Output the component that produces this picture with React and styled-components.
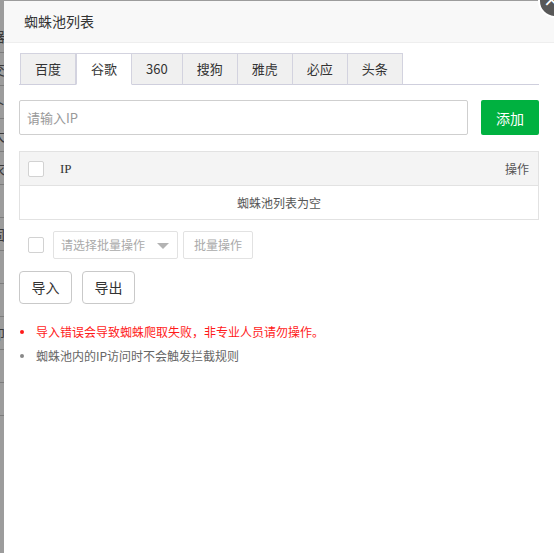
import styled, { createGlobalStyle } from 'styled-components';

const GlobalStyle = createGlobalStyle`
  html, body {
    margin: 0;
    padding: 0;
    overflow: hidden;
  }
  body {
    font-family: "Noto Sans CJK SC", "Noto Sans", sans-serif;
    color: #333;
  }
  * { box-sizing: border-box; }
`;

const tabs = ['百度', '谷歌', '360', '搜狗', '雅虎', '必应', '头条'];
const backRows = ['器', '交', '卜', '大', '衣', '阝', '固', '', '\\', '卯', '', ''];

const App = () => {
    return (
        <Page>
            <GlobalStyle />
            <Backdrop>
                {backRows.map((c, i) => (
                    <BackRow key={i}>{c}</BackRow>
                ))}
            </Backdrop>

            <Modal>
                <CloseButton>×</CloseButton>
                <Header>蜘蛛池列表</Header>
                <Body>
                    <TabBar>
                        {tabs.map(t => (
                            <Tab key={t} active={t === '谷歌'}>{t}</Tab>
                        ))}
                    </TabBar>

                    <InputRow>
                        <TextInput placeholder="请输入IP" />
                        <AddButton>添加</AddButton>
                    </InputRow>

                    <Table>
                        <HeadRow>
                            <Checkbox />
                            <IpHead>IP</IpHead>
                            <OpHead>操作</OpHead>
                        </HeadRow>
                        <EmptyRow>蜘蛛池列表为空</EmptyRow>
                    </Table>

                    <BatchRow>
                        <Checkbox />
                        <Select>
                            请选择批量操作
                            <Arrow />
                        </Select>
                        <GhostButton>批量操作</GhostButton>
                    </BatchRow>

                    <ButtonRow>
                        <PlainButton>导入</PlainButton>
                        <PlainButton>导出</PlainButton>
                    </ButtonRow>

                    <Notes>
                        <Note warn>导入错误会导致蜘蛛爬取失败，非专业人员请勿操作。</Note>
                        <Note>蜘蛛池内的IP访问时不会触发拦截规则</Note>
                    </Notes>
                </Body>
            </Modal>
        </Page>
    );
};

export default App;

const Page = styled.div`
  position: relative;
  width: 554px;
  height: 553px;
  overflow: hidden;
  background-color: #9c9c9c;
`;

const Backdrop = styled.div`
  display: flex;
  flex-direction: column;
  padding-top: 20px;
`;

const BackRow = styled.div`
  height: 33px;
  line-height: 33px;
  border-bottom: 1px solid #7d7d7d;
  font-size: 14px;
  color: #3a3a3a;
  text-indent: -9px;
`;

const Modal = styled.div`
  position: absolute;
  left: 4px;
  top: 1px;
  width: 550px;
  bottom: 0;
  background-color: #fff;
  display: flex;
  flex-direction: column;
`;

const CloseButton = styled.div`
  position: absolute;
  right: -18px;
  top: -17px;
  width: 34px;
  height: 34px;
  border-radius: 50%;
  background-color: #585858;
  border: 2px solid #fff;
  color: #fff;
  font-size: 20px;
  line-height: 26px;
  padding-left: 3px;
  font-family: "DejaVu Sans", sans-serif;
`;

const Header = styled.div`
  height: 42px;
  line-height: 40px;
  padding-left: 20px;
  background-color: #f8f8f8;
  border-bottom: 1px solid #eee;
  font-size: 14px;
  color: #333;
`;

const Body = styled.div`
  padding: 10px 15px 0;
  display: flex;
  flex-direction: column;
`;

const TabBar = styled.div`
  display: flex;
  padding-left: 1px;
  border-bottom: 1px solid #cfcfdd;
  height: 32px;
`;

const Tab = styled.div`
  height: 32px;
  line-height: 30px;
  padding: 0 14px;
  font-size: 13px;
  color: #333;
  border: 1px solid #d3d3df;
  border-left: ${p => (p.active ? '1px solid #d3d3df' : 'none')};
  border-bottom: ${p => (p.active ? '1px solid #fff' : '1px solid #cfcfdd')};
  background-color: ${p => (p.active ? '#fff' : '#f0f0f0')};
  &:first-child {
    border-left: 1px solid #d3d3df;
  }
`;

const InputRow = styled.div`
  display: flex;
  gap: 13px;
  margin-top: 15px;
`;

const TextInput = styled.input`
  flex: 1;
  height: 35px;
  border: 1px solid #cfcfcf;
  border-radius: 2px;
  padding: 0 7px;
  font-family: "Noto Sans CJK SC", "Noto Sans", sans-serif;
  font-size: 13px;
  outline: 0;
  &::placeholder {
    color: #999;
  }
`;

const AddButton = styled.button`
  width: 58px;
  height: 35px;
  border: none;
  border-radius: 2px;
  background-color: #00b140;
  color: #fff;
  font-family: "Noto Sans CJK SC", "Noto Sans", sans-serif;
  font-size: 14px;
`;

const Table = styled.div`
  margin-top: 16px;
  border: 1px solid #e2e2e2;
`;

const HeadRow = styled.div`
  display: flex;
  align-items: center;
  height: 34px;
  padding: 0 9px 0 8px;
  background-color: #f4f4f4;
  border-bottom: 1px solid #e2e2e2;
`;

const Checkbox = styled.span`
  display: inline-block;
  width: 16px;
  height: 16px;
  border: 1px solid #d2d2d2;
  border-radius: 2px;
  background-color: #fff;
  flex-shrink: 0;
`;

const IpHead = styled.span`
  margin-left: 16px;
  font-family: "Liberation Serif", serif;
  font-size: 13px;
  color: #333;
`;

const OpHead = styled.span`
  margin-left: auto;
  font-size: 12px;
  color: #555;
`;

const EmptyRow = styled.div`
  height: 33px;
  line-height: 33px;
  text-align: center;
  font-size: 12px;
  color: #555;
`;

const BatchRow = styled.div`
  display: flex;
  align-items: center;
  margin-top: 11px;
  padding-left: 9px;
  gap: 9px;
`;

const Select = styled.div`
  position: relative;
  width: 125px;
  height: 28px;
  line-height: 26px;
  padding-left: 7px;
  border: 1px solid #e2e2e2;
  border-radius: 2px;
  font-size: 12px;
  color: #aaa;
`;

const Arrow = styled.span`
  position: absolute;
  right: 8px;
  top: 11px;
  width: 0;
  height: 0;
  border-left: 6px solid transparent;
  border-right: 6px solid transparent;
  border-top: 6px solid #b3b3b3;
`;

const GhostButton = styled.div`
  margin-left: -4px;
  width: 70px;
  height: 28px;
  line-height: 26px;
  text-align: center;
  border: 1px solid #e2e2e2;
  border-radius: 2px;
  font-size: 12px;
  color: #aaa;
`;

const ButtonRow = styled.div`
  display: flex;
  gap: 10px;
  margin-top: 12px;
`;

const PlainButton = styled.div`
  width: 53px;
  height: 33px;
  line-height: 31px;
  text-align: center;
  border: 1px solid #c9c9c9;
  border-radius: 4px;
  font-size: 14px;
  color: #333;
`;

const Notes = styled.ul`
  list-style: none;
  margin: 16px 0 0;
  padding: 0;
`;

const Note = styled.li`
  position: relative;
  padding-left: 17px;
  height: 24px;
  line-height: 24px;
  font-size: 12px;
  color: ${p => (p.warn ? '#ff1a1a' : '#666')};
  &::before {
    content: '';
    position: absolute;
    left: 1px;
    top: 10px;
    width: 4px;
    height: 4px;
    border-radius: 50%;
    background-color: ${p => (p.warn ? '#ff1a1a' : '#888')};
  }
`;
